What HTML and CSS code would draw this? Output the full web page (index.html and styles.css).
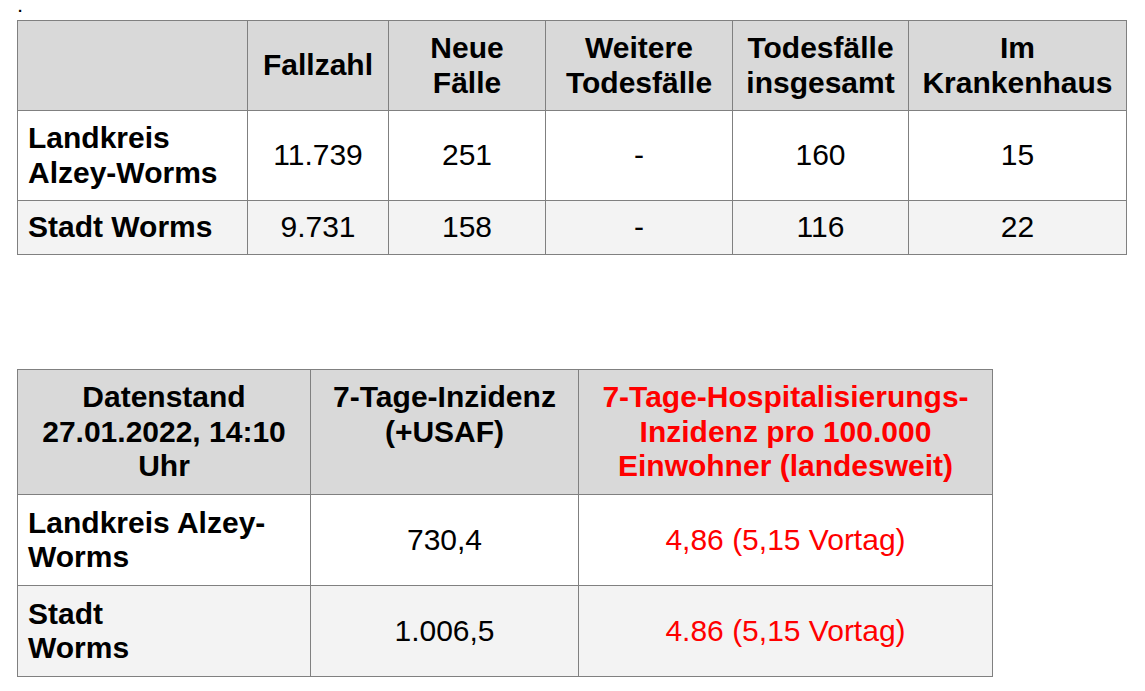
FILE: index.html
```html
<!DOCTYPE html>
<html lang="de">
<head>
<meta charset="utf-8">
<title>Corona Zahlen</title>
<link rel="stylesheet" href="styles.css">
</head>
<body>
<p class="dot">.</p>
<table class="grid grid-one">
  <colgroup>
    <col class="c1a"><col class="c1b"><col class="c1c"><col class="c1d"><col class="c1e"><col class="c1f">
  </colgroup>
  <tr class="head">
    <th></th>
    <th>Fallzahl</th>
    <th>Neue<br>Fälle</th>
    <th>Weitere<br>Todesfälle</th>
    <th>Todesfälle<br>insgesamt</th>
    <th>Im<br>Krankenhaus</th>
  </tr>
  <tr>
    <th class="name">Landkreis<br>Alzey-Worms</th>
    <td>11.739</td>
    <td>251</td>
    <td>-</td>
    <td>160</td>
    <td>15</td>
  </tr>
  <tr class="alt single">
    <th class="name">Stadt Worms</th>
    <td>9.731</td>
    <td>158</td>
    <td>-</td>
    <td>116</td>
    <td>22</td>
  </tr>
</table>

<table class="grid grid-two">
  <colgroup>
    <col class="c2a"><col class="c2b"><col class="c2c">
  </colgroup>
  <tr class="head">
    <th>Datenstand<br>27.01.2022, 14:10<br>Uhr</th>
    <th class="top">7-Tage-Inzidenz<br>(+USAF)</th>
    <th class="red">7-Tage-Hospitalisierungs-<br>Inzidenz pro 100.000<br>Einwohner (landesweit)</th>
  </tr>
  <tr>
    <th class="name">Landkreis Alzey-<br>Worms</th>
    <td>730,4</td>
    <td class="red">4,86 (5,15 Vortag)</td>
  </tr>
  <tr class="alt">
    <th class="name">Stadt<br>Worms</th>
    <td>1.006,5</td>
    <td class="red">4.86 (5,15 Vortag)</td>
  </tr>
</table>
</body>
</html>
```
FILE: styles.css
```css
body {
  margin: 0;
  background: #ffffff;
  color: #000000;
  font-family: "Liberation Sans", Arial, sans-serif;
}

.dot {
  margin: 0 0 0 18px;
  font-size: 15px;
  font-weight: bold;
  line-height: 14px;
  height: 14px;
}

.grid {
  border-collapse: collapse;
  table-layout: fixed;
  margin-left: 17px;
  font-size: 30px;
  line-height: 34.5px;
}

.grid-one {
  width: 1109px;
  margin-top: 6px;
}

.grid-two {
  width: 975px;
  margin-top: 114px;
}

.c1a { width: 230px; }
.c1b { width: 141px; }
.c1c { width: 157px; }
.c1d { width: 187px; }
.c1e { width: 176px; }
.c1f { width: 218px; }

.c2a { width: 293px; }
.c2b { width: 268px; }
.c2c { width: 414px; }

.grid th,
.grid td {
  border: 1px solid #808080;
  padding: 10px 10px;
  text-align: center;
  vertical-align: middle;
}

.grid-two th,
.grid-two td {
  padding-top: 10.5px;
  padding-bottom: 10.5px;
}

.grid th {
  font-weight: bold;
}

.grid td {
  font-weight: normal;
}

.grid th.name {
  text-align: left;
}

.grid th.top {
  vertical-align: top;
}

.head th {
  background: #d9d9d9;
}

.alt th,
.alt td {
  background: #f3f3f3;
}

.single th,
.single td {
  padding-top: 9px;
  padding-bottom: 9px;
}

.red {
  color: #ff0000;
}
```
